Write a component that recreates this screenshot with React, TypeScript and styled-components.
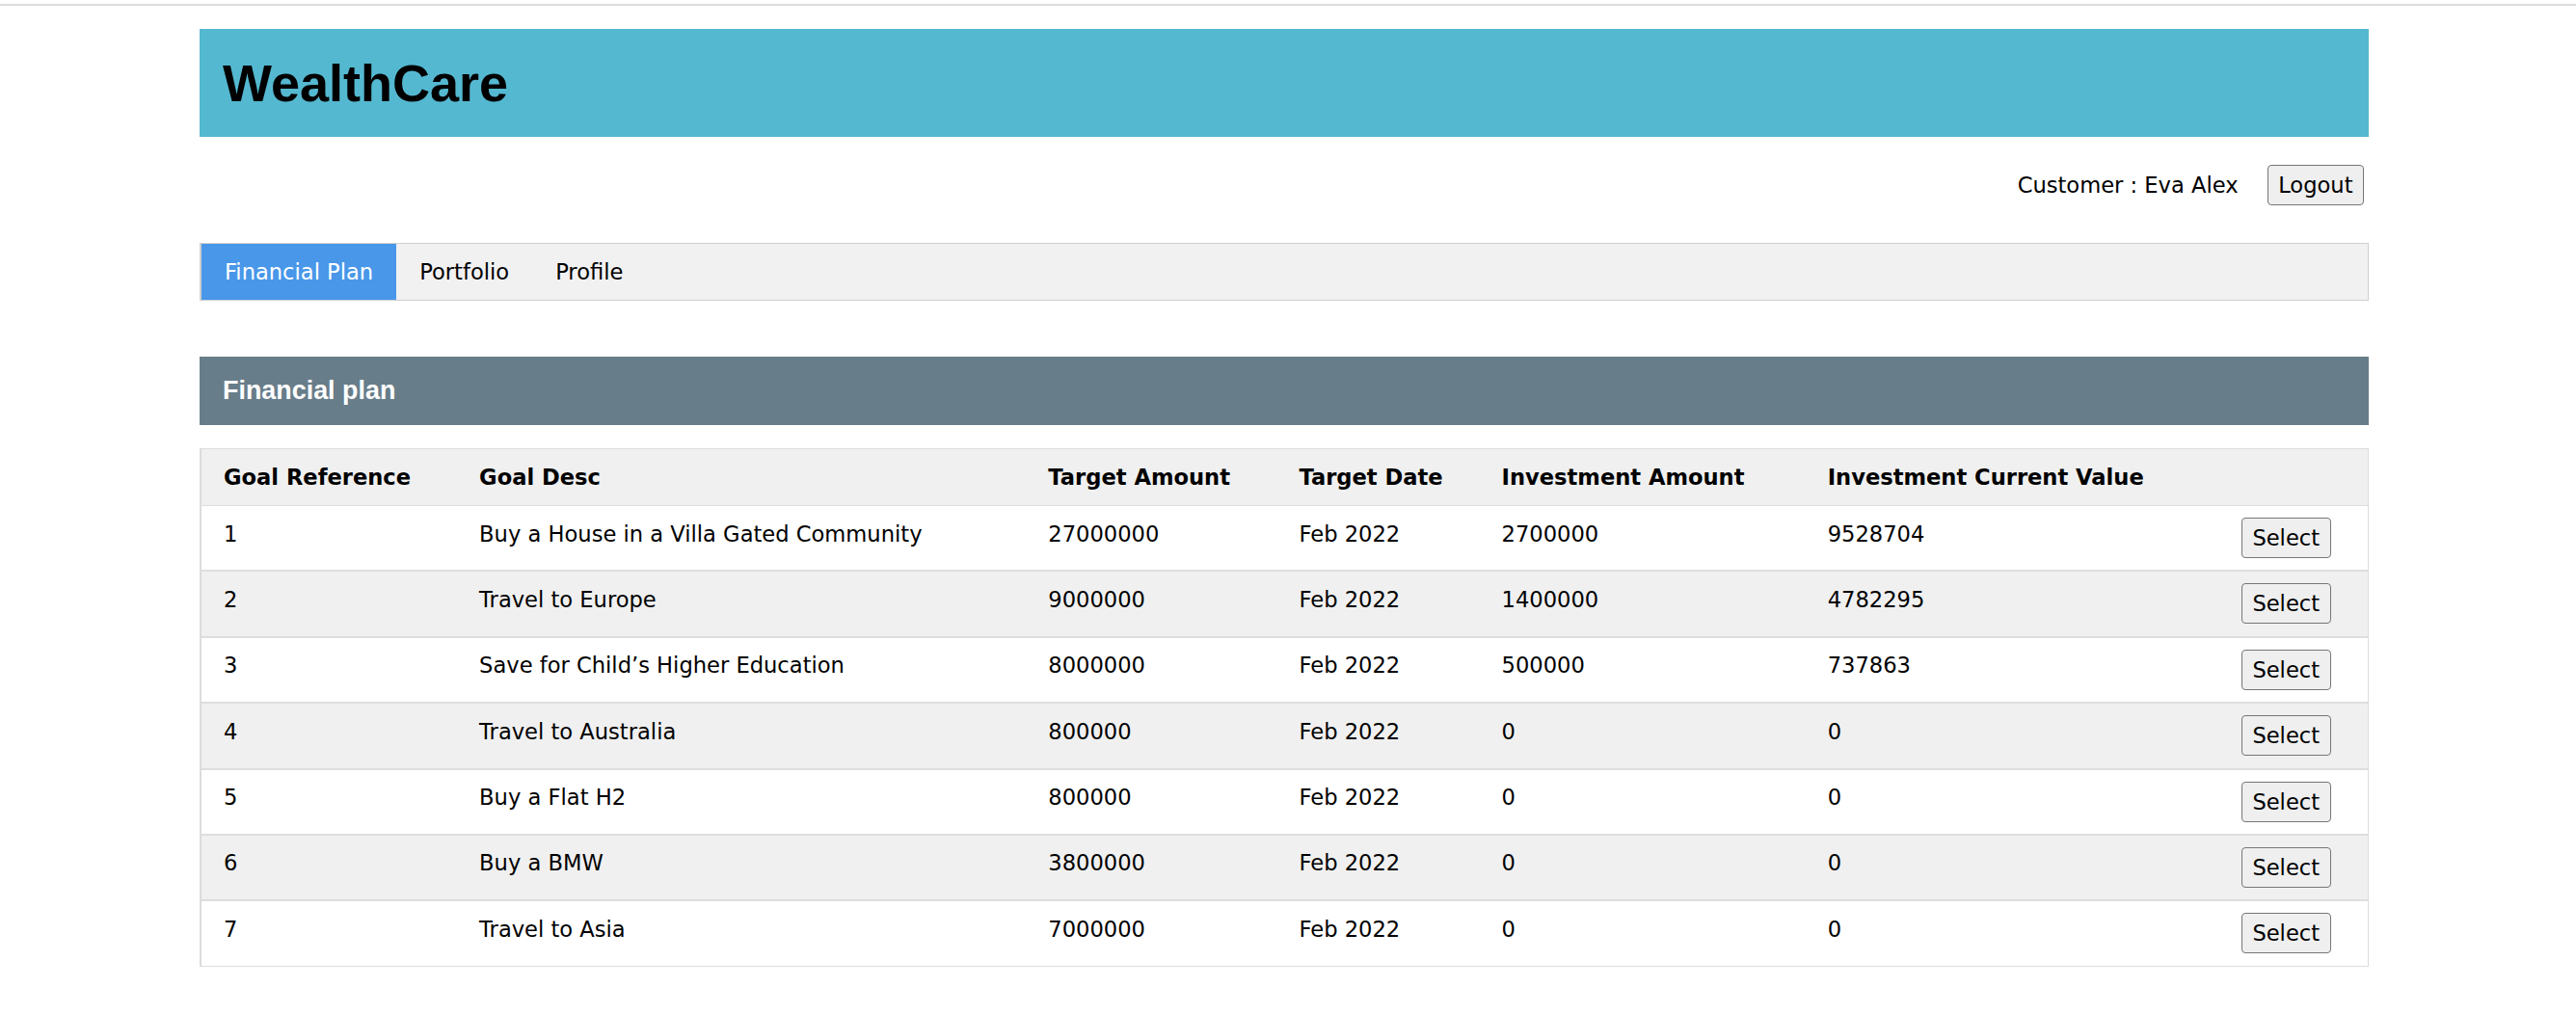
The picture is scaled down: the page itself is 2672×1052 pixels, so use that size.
import styled, { createGlobalStyle } from "styled-components"

const GlobalStyle = createGlobalStyle`
    body {
        margin: 0;
        background: #fff;
        font-family: "DejaVu Sans", Verdana, sans-serif;
        font-size: 22.6px;
        color: #000;
    }
`

const goals = [
    { ref: 1, desc: "Buy a House in a Villa Gated Community", target: "27000000", date: "Feb 2022", invested: "2700000", current: "9528704" },
    { ref: 2, desc: "Travel to Europe", target: "9000000", date: "Feb 2022", invested: "1400000", current: "4782295" },
    { ref: 3, desc: "Save for Child’s Higher Education", target: "8000000", date: "Feb 2022", invested: "500000", current: "737863" },
    { ref: 4, desc: "Travel to Australia", target: "800000", date: "Feb 2022", invested: "0", current: "0" },
    { ref: 5, desc: "Buy a Flat H2", target: "800000", date: "Feb 2022", invested: "0", current: "0" },
    { ref: 6, desc: "Buy a BMW", target: "3800000", date: "Feb 2022", invested: "0", current: "0" },
    { ref: 7, desc: "Travel to Asia", target: "7000000", date: "Feb 2022", invested: "0", current: "0" },
]

const columns = [265, 590, 260, 210, 338, 429, 154]

export default function App() {
    return (
        <>
            <GlobalStyle />
            <TopLine />
            <Container>
                <Header>
                    <h1>WealthCare</h1>
                </Header>

                <UserBar>
                    <span>Customer : Eva Alex</span>
                    <Button>Logout</Button>
                </UserBar>

                <Tabs>
                    <Tab $active>Financial Plan</Tab>
                    <Tab>Portfolio</Tab>
                    <Tab>Profile</Tab>
                </Tabs>

                <SectionTitle>Financial plan</SectionTitle>

                <Table>
                    <colgroup>
                        {columns.map((w, i) => (
                            <col key={i} style={{ width: w }} />
                        ))}
                    </colgroup>
                    <thead>
                        <tr>
                            <th>Goal Reference</th>
                            <th>Goal Desc</th>
                            <th>Target Amount</th>
                            <th>Target Date</th>
                            <th>Investment Amount</th>
                            <th>Investment Current Value</th>
                            <th></th>
                        </tr>
                    </thead>
                    <tbody>
                        {goals.map((g) => (
                            <Row key={g.ref} $striped={g.ref % 2 === 0}>
                                <td>{g.ref}</td>
                                <td>{g.desc}</td>
                                <td>{g.target}</td>
                                <td>{g.date}</td>
                                <td>{g.invested}</td>
                                <td>{g.current}</td>
                                <ActionCell>
                                    <Button>Select</Button>
                                </ActionCell>
                            </Row>
                        ))}
                    </tbody>
                </Table>
            </Container>
        </>
    )
}

// Styled components
const TopLine = styled.div`
    margin-top: 4px;
    height: 2px;
    background: #dcdcdc;
`

const Container = styled.div`
    width: 2250px;
    margin-left: 207px;
    padding-bottom: 40px;
`

const Header = styled.header`
    margin-top: 24px;
    height: 112px;
    background: #54b8d0;
    display: flex;
    align-items: center;
    padding-left: 24px;
    box-sizing: border-box;

    h1 {
        margin: 0;
        font-family: "Liberation Sans", Arial, sans-serif;
        font-weight: 700;
        font-size: 54px;
        color: #000;
    }
`

const UserBar = styled.div`
    margin-top: 29px;
    height: 41px;
    display: flex;
    align-items: center;
    justify-content: flex-end;
    gap: 30px;
    padding-right: 5px;
`

const Button = styled.button`
    font-family: "DejaVu Sans", Verdana, sans-serif;
    font-size: 22.6px;
    color: #000;
    height: 42px;
    padding: 0 10.5px;
    background: #efefef;
    border: 1px solid #767676;
    border-radius: 4px;
    cursor: pointer;
`

const Tabs = styled.nav`
    margin-top: 40px;
    height: 60px;
    box-sizing: border-box;
    display: flex;
    background: #f1f1f1;
    border: 1px solid #cfcfcf;
    border-left-width: 2px;
`

const Tab = styled.a<{ $active?: boolean }>`
    display: flex;
    align-items: center;
    padding: 0 24px;
    color: ${(p) => (p.$active ? "#fff" : "#000")};
    background: ${(p) => (p.$active ? "#4897e9" : "transparent")};
    cursor: pointer;
`

const SectionTitle = styled.h2`
    margin: 58px 0 0;
    height: 71px;
    display: flex;
    align-items: center;
    padding-left: 24px;
    background: #687d8a;
    color: #fff;
    font-family: "Liberation Sans", Arial, sans-serif;
    font-weight: 700;
    font-size: 26.9px;
`

const Table = styled.table`
    margin-top: 24px;
    width: 100%;
    table-layout: fixed;
    border-collapse: separate;
    border-spacing: 0;
    border: 1px solid #dcdcdc;
    border-left-width: 2px;

    th,
    td {
        text-align: left;
        vertical-align: top;
        padding: 15.5px 23px 0;
        line-height: normal;
        white-space: nowrap;
    }

    th {
        background: #f0f0f0;
        font-weight: 700;
        height: 42px;
        padding-top: 16px;
        padding-bottom: 0;
        border-bottom: 1px solid #dcdcdc;
    }
`

const Row = styled.tr<{ $striped: boolean }>`
    background: ${(p) => (p.$striped ? "#f0f0f0" : "#fff")};

    td {
        height: 50.9px;
        border-bottom: 2px solid #dedede;
    }

    &:last-child td {
        border-bottom: none;
    }
`

const ActionCell = styled.td`
    && {
        padding-top: 12px;
    }
`
